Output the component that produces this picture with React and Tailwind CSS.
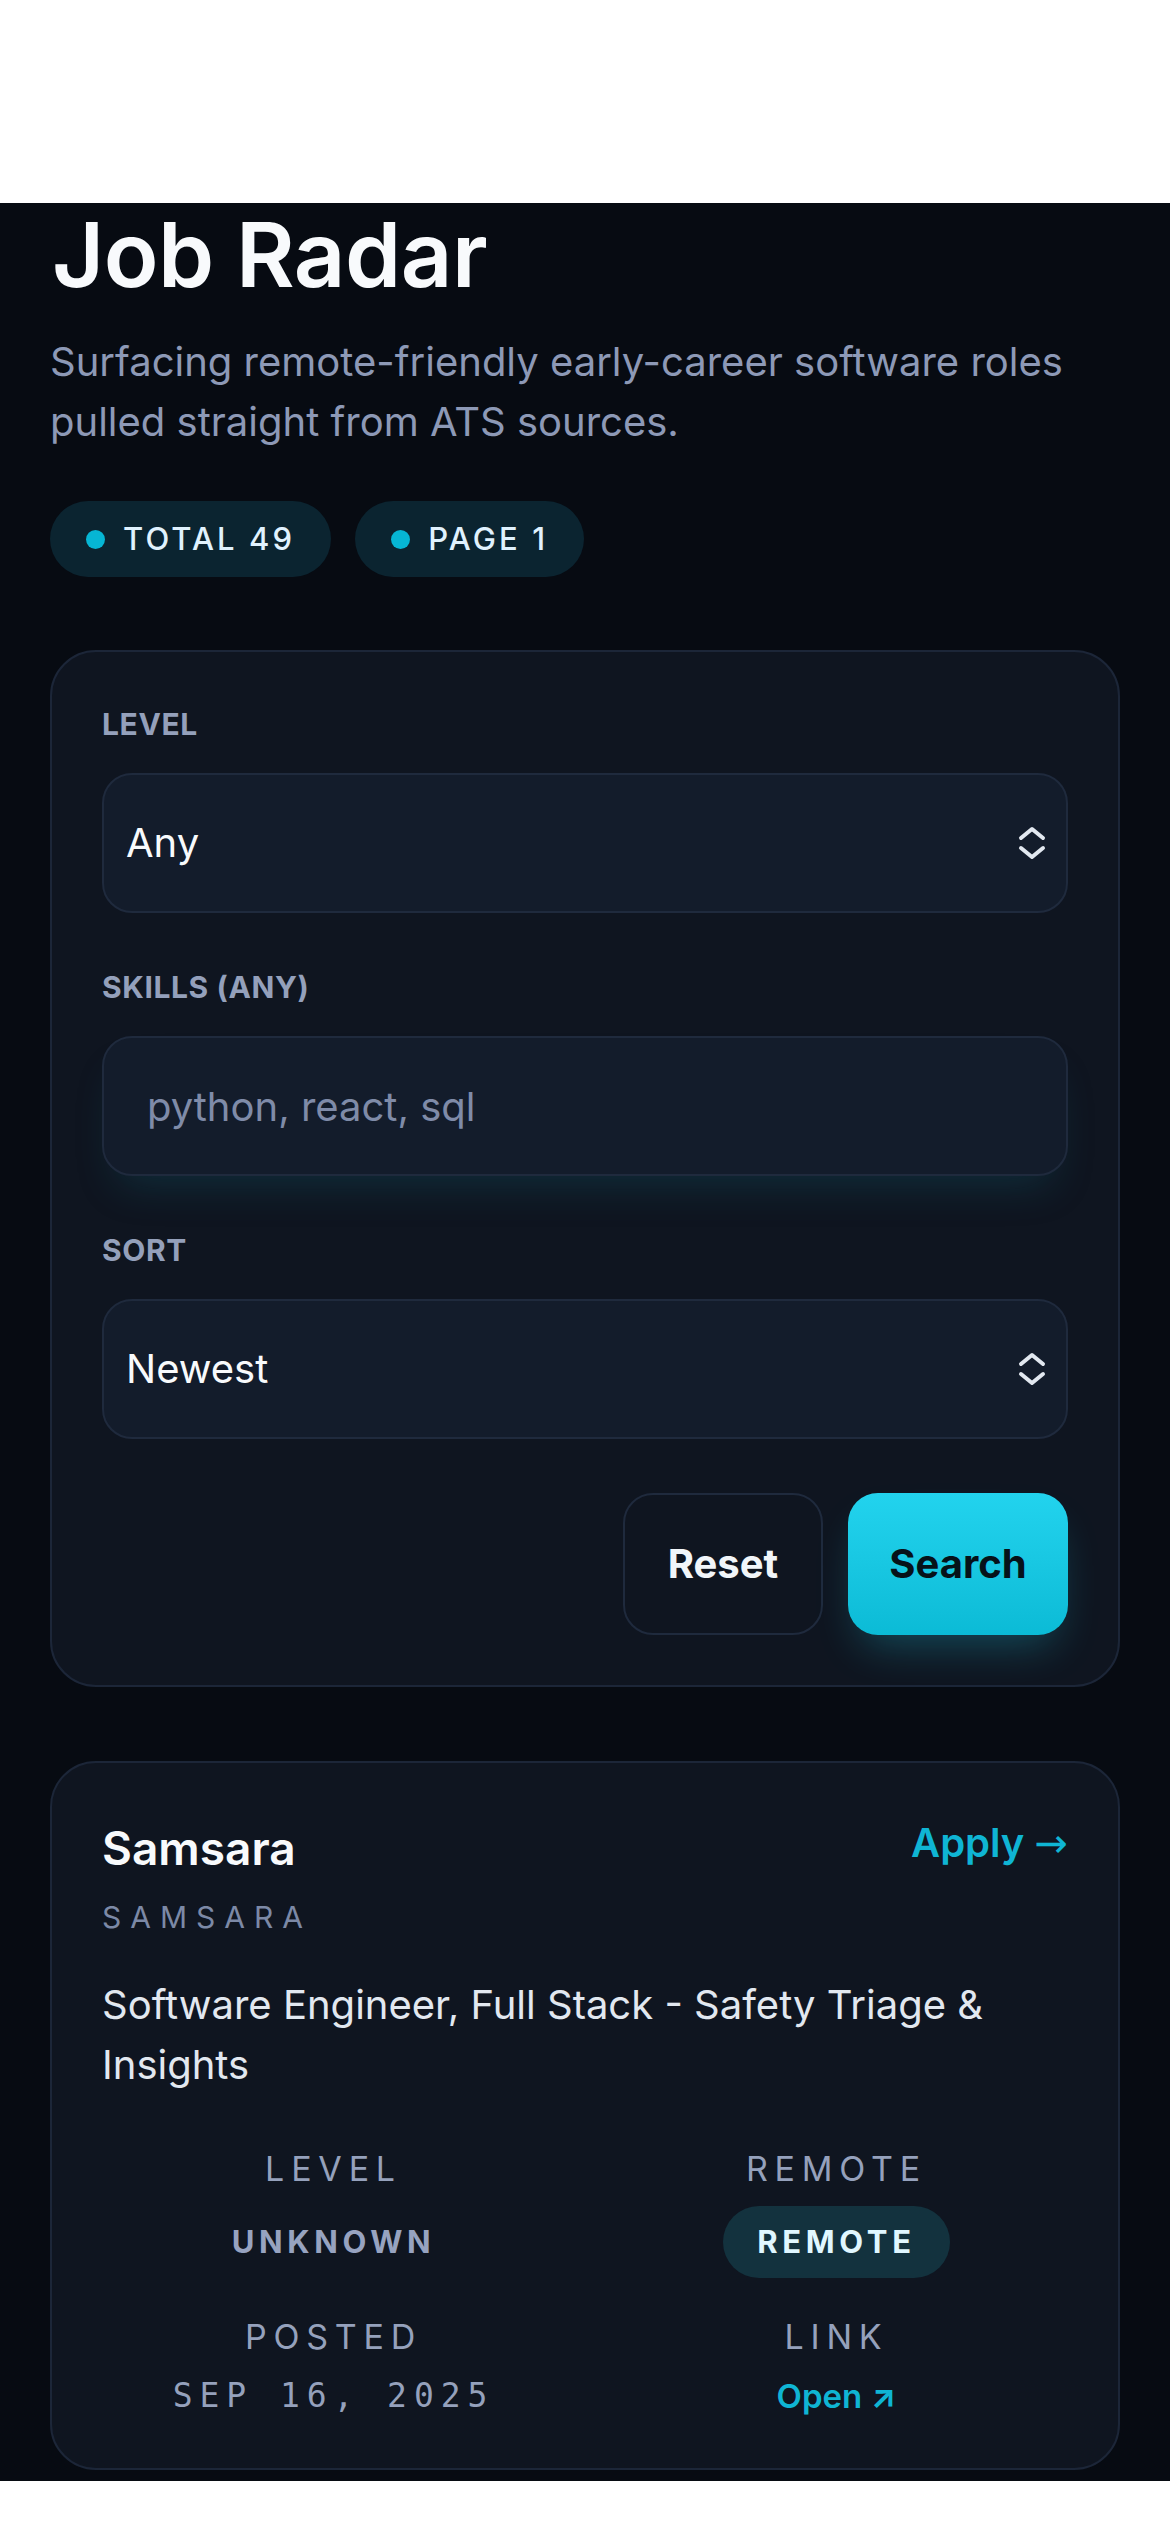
import React, { useState } from 'react';

const ChevronsIcon = () => (
  <svg width="28" height="34" viewBox="0 0 28 34" fill="none" stroke="#e2e8f0" strokeWidth="4" strokeLinecap="round" strokeLinejoin="round">
    <path d="M3 12 L14 3 L25 12" />
    <path d="M3 22 L14 31 L25 22" />
  </svg>
);

const Field = ({ label, children }) => (
  <div>
    <label className="block text-[30px] leading-[40px] font-bold uppercase tracking-[0.02em] text-[#94a0bb]">{label}</label>
    <div className="mt-[29px]">{children}</div>
  </div>
);

const SelectBox = ({ value, onChange, options }) => (
  <div className="relative">
    <select
      value={value}
      onChange={(e) => onChange(e.target.value)}
      className="appearance-none w-full h-[140px] rounded-[30px] border-2 border-[#1f2a3d] bg-[#131c2b] pl-[22px] pr-[70px] text-[40px] text-[#f8fafc] outline-none"
    >
      {options.map((o) => (
        <option key={o} value={o}>{o}</option>
      ))}
    </select>
    <span className="pointer-events-none absolute right-[22px] top-1/2 -translate-y-1/2 flex">
      <ChevronsIcon />
    </span>
  </div>
);

const Badge = ({ children }) => (
  <div className="flex items-center h-[76px] rounded-full bg-[#0b2430] pl-[36px] pr-[36px]">
    <span className="w-[19px] h-[19px] rounded-full bg-[#06b6d4]" />
    <span className="ml-[18px] text-[31px] font-medium tracking-[0.1em] text-[#e0f2fe]">{children}</span>
  </div>
);

const Meta = ({ label, children }) => (
  <div className="flex flex-col items-center text-center">
    <div className="text-[34px] leading-[44px] tracking-[0.2em] text-[#95a1bc]">{label}</div>
    <div className="mt-[15px] h-[72px] flex items-center justify-center">{children}</div>
  </div>
);

const App = () => {
  const [level, setLevel] = useState('Any');
  const [skills, setSkills] = useState('');
  const [sort, setSort] = useState('Newest');

  const job = {
    company: 'Samsara',
    title: 'Software Engineer, Full Stack - Safety Triage & Insights',
    level: 'Unknown',
    remote: 'Remote',
    posted: 'Sep 16, 2025'
  };

  return (
    <div className="bg-white font-['Inter','Noto_Sans',sans-serif]">
      <div className="h-[203px]" />
      <div className="bg-[#070b12] px-[50px] pt-[2px] pb-[11px]">
        <h1 className="text-[90px] leading-[100px] font-semibold tracking-[-0.005em] text-[#f8fafc] pl-[2px]">Job Radar</h1>
        <p className="mt-[27px] text-[40px] leading-[60px] text-[#8d99b6]">
          Surfacing remote-friendly early-career software roles pulled straight from ATS sources.
        </p>
        <div className="mt-[49px] flex gap-[24px]">
          <Badge>TOTAL 49</Badge>
          <Badge>PAGE 1</Badge>
        </div>

        <form
          onSubmit={(e) => e.preventDefault()}
          className="mt-[73px] rounded-[46px] border-2 border-[#1c2638] bg-[#0f1520] px-[50px] pt-[52px] pb-[50px] flex flex-col gap-[54px]"
        >
          <Field label="Level">
            <SelectBox value={level} onChange={setLevel} options={['Any', 'Intern', 'New Grad', 'Junior']} />
          </Field>
          <Field label="Skills (any)">
            <input
              type="text"
              value={skills}
              onChange={(e) => setSkills(e.target.value)}
              placeholder="python, react, sql"
              className="w-full h-[140px] rounded-[30px] border-2 border-[#1f2a3d] bg-[#131c2b] pl-[43px] text-[40px] text-[#f8fafc] placeholder:text-[#7f8ba8] outline-none shadow-[0_24px_40px_-16px_rgba(20,120,140,0.25)]"
            />
          </Field>
          <Field label="Sort">
            <SelectBox value={sort} onChange={setSort} options={['Newest', 'Oldest']} />
          </Field>
          <div className="flex justify-end gap-[25px]">
            <button
              type="button"
              onClick={() => { setLevel('Any'); setSkills(''); setSort('Newest'); }}
              className="w-[200px] h-[142px] rounded-[30px] border-2 border-[#1f2a3d] text-[40px] font-bold text-[#f1f5f9]"
            >
              Reset
            </button>
            <button
              type="submit"
              className="w-[220px] h-[142px] rounded-[30px] bg-gradient-to-b from-[#22d3ee] to-[#0bbbd6] text-[40px] font-bold text-[#061219] shadow-[0_22px_44px_-14px_rgba(34,211,238,0.3)]"
            >
              Search
            </button>
          </div>
        </form>

        <div className="mt-[74px] rounded-[46px] border-2 border-[#1c2638] bg-[#0f1520] p-[50px]">
          <div className="flex justify-between items-start">
            <h2 className="text-[46px] leading-[70px] font-semibold text-[#f8fafc]">{job.company}</h2>
            <a href="#" className="text-[40px] leading-[59px] font-semibold text-[#0fb5d4]">
              Apply <span className="font-normal font-['DejaVu_Sans',sans-serif]">→</span>
            </a>
          </div>
          <div className="mt-[14px] text-[30px] leading-[40px] tracking-[0.3em] uppercase text-[#7c89a6]">{job.company}</div>
          <p className="mt-[38px] text-[40px] leading-[60px] text-[#e2e8f0]">{job.title}</p>
          <div className="mt-[52px] grid grid-cols-2 gap-x-[40px] gap-y-[37px]">
            <Meta label="LEVEL">
              <span className="text-[31px] font-bold tracking-[0.15em] uppercase text-[#97a3c0]">{job.level}</span>
            </Meta>
            <Meta label="REMOTE">
              <span className="h-[72px] px-[34px] flex items-center rounded-full bg-[#13323e] text-[31px] font-bold tracking-[0.15em] uppercase text-[#e0f7ff]">{job.remote}</span>
            </Meta>
            <div className="flex flex-col items-center text-center">
              <div className="text-[34px] leading-[44px] tracking-[0.2em] text-[#95a1bc]">POSTED</div>
              <div className="mt-[15px] text-[33px] leading-[44px] tracking-[0.21em] uppercase text-[#95a1bc] font-['DejaVu_Sans_Mono',monospace]">{job.posted}</div>
            </div>
            <div className="flex flex-col items-center text-center">
              <div className="text-[34px] leading-[44px] tracking-[0.2em] text-[#95a1bc]">LINK</div>
              <a href="#" className="mt-[15px] text-[33px] leading-[44px] font-semibold text-[#0fb5d4]">
                Open <span className="font-bold">↗</span>
              </a>
            </div>
          </div>
        </div>
      </div>
    </div>
  );
};

export default App;
